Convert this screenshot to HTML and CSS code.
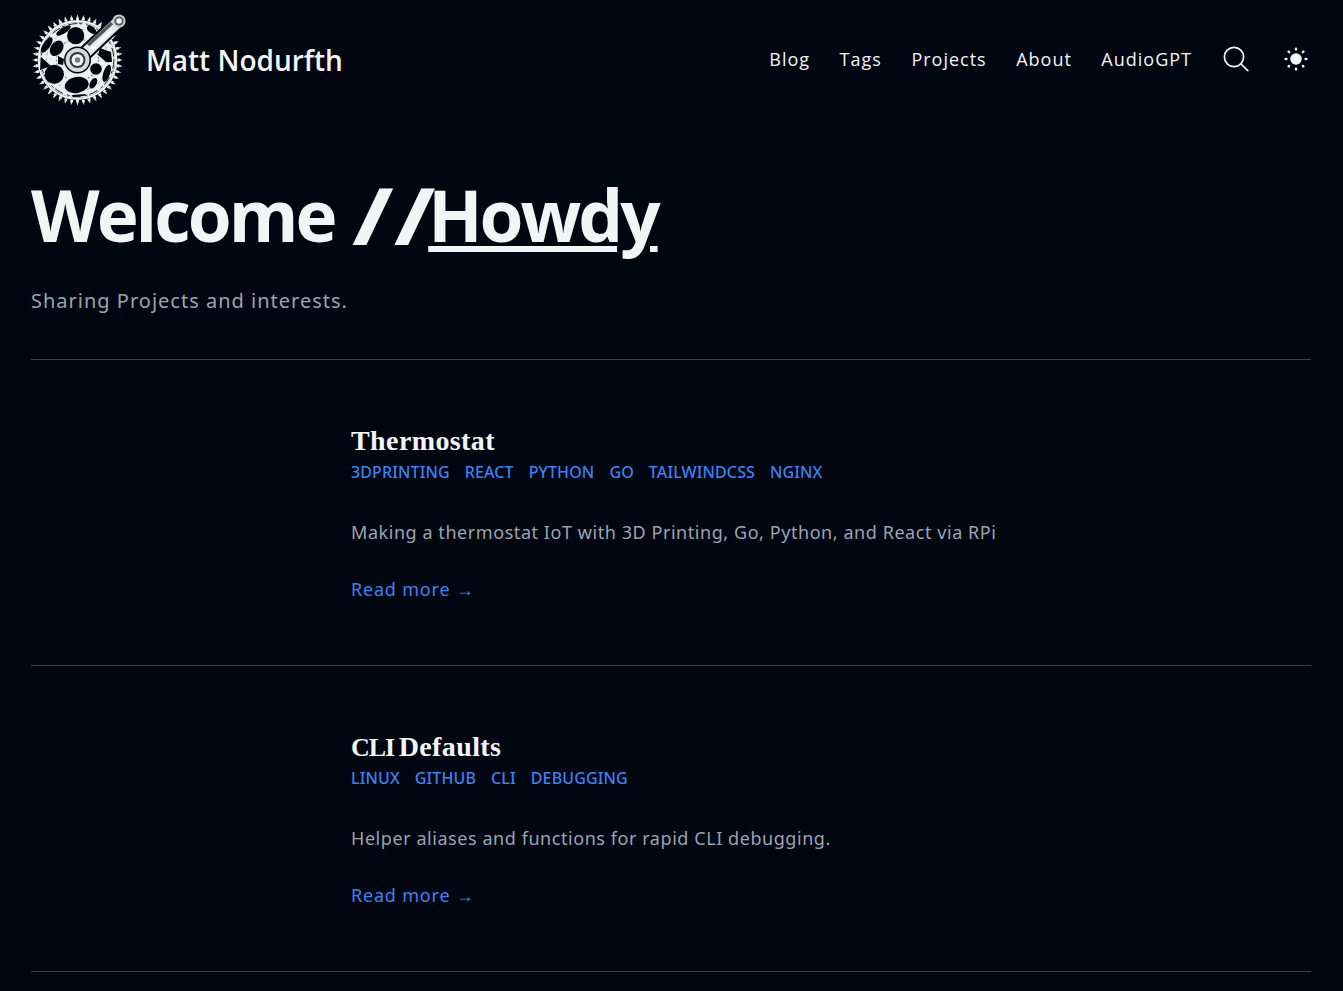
FILE: index.html
```html
<!DOCTYPE html>
<html lang="en">
<head>
<meta charset="utf-8">
<title>Matt Nodurfth</title>
<link rel="stylesheet" href="styles.css">
</head>
<body>
<div class="page">
  <header class="site-header">
    <a class="brand" href="#">
      <svg class="logo" viewBox="0 0 96 96" aria-hidden="true">
        <g fill="none" stroke="#f4f5f7">
          <circle cx="45.5" cy="48" r="44.4" pathLength="44" stroke-width="1.2" stroke-dasharray="0.12 0.88" stroke-dashoffset="0.06"/>
          <circle cx="45.5" cy="48" r="43" pathLength="44" stroke-width="1.6" stroke-dasharray="0.26 0.74" stroke-dashoffset="0.13"/>
          <circle cx="45.5" cy="48" r="41.2" pathLength="44" stroke-width="2.4" stroke-dasharray="0.48 0.52" stroke-dashoffset="0.24"/>
          <circle cx="45.5" cy="48" r="38.8" stroke-width="2.2"/>
        </g>
        <circle cx="45.5" cy="48" r="37.8" fill="#eeeff1"/>
        <g fill="none" stroke="#01050f">
          <circle cx="45.5" cy="48" r="36.4" stroke-width="0.9" stroke-dasharray="9 2 3 4"/>
          <circle cx="45.5" cy="48" r="31" stroke-width="0.6" stroke="#777a80" stroke-dasharray="3 3"/>
          <circle cx="45.5" cy="48" r="21" stroke-width="1.2" stroke="#8d9096" stroke-dasharray="2 2"/>
        </g>
        <g fill="#01050f">
          <circle cx="43.7" cy="23.7" r="8.6"/>
          <ellipse cx="24.7" cy="36.3" rx="6" ry="8.4" transform="rotate(35 24.7 36.3)"/>
          <ellipse cx="31.5" cy="18.5" rx="3" ry="8.4" transform="rotate(58 31.5 18.5)"/>
          <ellipse cx="14.7" cy="33" rx="3.6" ry="9" transform="rotate(35 14.7 33)"/>
          <path d="M9 45l10 9-11 4z"/>
          <circle cx="22.3" cy="62.3" r="9.6"/>
          <ellipse cx="44.7" cy="73" rx="12" ry="8" transform="rotate(-10 44.7 73)"/>
          <circle cx="64" cy="57" r="5.8"/>
          <ellipse cx="74.7" cy="61.3" rx="3.4" ry="9" transform="rotate(18 74.7 61.3)"/>
          <ellipse cx="61.3" cy="71.3" rx="3.2" ry="5.8" transform="rotate(30 61.3 71.3)"/>
          <path d="M68 36l11 4 1 10-6 0-8-7z"/>
          <ellipse cx="59.7" cy="18" rx="5.6" ry="3" transform="rotate(35 59.7 18)"/>
          <path d="M40 83l14-1-2 2-11 1z"/>
          <path d="M26 44l6 3-1 6-5-1z"/>
        </g>
        <path d="M48 46L87 9" stroke="#01050f" stroke-width="15" stroke-linecap="round"/>
        <path d="M47 47L87 9" stroke="#e6e7ea" stroke-width="11" stroke-linecap="round"/>
        <path d="M56 33L80 11" stroke="#53565c" stroke-width="3.6"/>
        <path d="M60 37L80 18" stroke="#ffffff" stroke-width="3"/>
        <circle cx="87" cy="9" r="6.6" fill="#c9cacd"/>
        <circle cx="87" cy="9" r="4.6" fill="#55585e"/>
        <circle cx="87" cy="9" r="2.8" fill="#f4f5f7"/>
        <circle cx="45.5" cy="48" r="13.5" fill="#01050f"/>
        <circle cx="45.5" cy="48" r="12" fill="#d8d9dc"/>
        <circle cx="45.5" cy="48" r="8" fill="#33353b"/>
        <circle cx="45.5" cy="48" r="6" fill="#f4f5f7"/>
        <circle cx="45.5" cy="48" r="2.8" fill="#777a80"/>
      </svg>
      <span class="brand-name">Matt Nodurfth</span>
    </a>
    <nav class="nav">
      <a href="#">Blog</a>
      <a href="#">Tags</a>
      <a href="#">Projects</a>
      <a href="#">About</a>
      <a href="#">AudioGPT</a>
      <button class="icon-btn search" aria-label="Search">
        <svg viewBox="0 0 26 26" fill="none" stroke="#f1f3f5" stroke-width="1.7" stroke-linecap="round"><circle cx="11" cy="11" r="9.6"/><path d="M18 18l6.8 6.6"/></svg>
      </button>
      <button class="icon-btn theme" aria-label="Theme">
        <svg viewBox="0 0 24 24" fill="#f1f3f5" stroke="none"><circle cx="12" cy="12" r="5.8"/><g stroke="#f1f3f5" stroke-width="2.4" stroke-linecap="round"><path d="M12 1.6v.8M12 21.6v.8M1.6 12h.8M21.6 12h.8M4.6 4.6l.5.5M18.9 18.9l.5.5M4.6 19.4l.5-.5M18.9 5.1l.5-.5"/></g></svg>
      </button>
    </nav>
  </header>

  <section class="intro">
    <h1 class="hero"><span class="hero-word">Welcome</span> <span class="hero-slash">//</span><a href="#">Howdy</a></h1>
    <p class="lead">Sharing Projects and interests.</p>
  </section>

  <ul class="posts">
    <li class="post">
      <div class="post-body">
        <h2><a href="#">Thermostat</a></h2>
        <div class="tags"><a href="#">3DPRINTING</a><a href="#">REACT</a><a href="#">PYTHON</a><a href="#">GO</a><a href="#">TAILWINDCSS</a><a href="#">NGINX</a></div>
        <p class="summary">Making a thermostat IoT with 3D Printing, Go, Python, and React via RPi</p>
        <a class="more" href="#">Read more <span class="arrow">→</span></a>
      </div>
    </li>
    <li class="post">
      <div class="post-body">
        <h2><a href="#"><span class="caps">CLI</span> Defaults</a></h2>
        <div class="tags"><a href="#">LINUX</a><a href="#">GITHUB</a><a href="#">CLI</a><a href="#">DEBUGGING</a></div>
        <p class="summary">Helper aliases and functions for rapid CLI debugging.</p>
        <a class="more" href="#">Read more <span class="arrow">→</span></a>
      </div>
    </li>
  </ul>
</div>
</body>
</html>
```

FILE: styles.css
```css
* { box-sizing: border-box; }
html, body { margin: 0; padding: 0; }
body {
  background: #020610;
  color: #f3f4f6;
  font-family: "Noto Sans", "Liberation Sans", sans-serif;
  height: 991px;
  overflow: hidden;
}
a { color: inherit; text-decoration: none; }
.page { padding: 0 32px 0 31px; }
.site-header {
  display: flex;
  align-items: center;
  justify-content: space-between;
  height: 120px;
}
.brand { display: flex; align-items: center; gap: 18px; }
.logo { width: 96px; height: 96px; display: block; margin-left: 1px; }
.brand-name {
  font-family: "Open Sans", sans-serif;
  font-size: 28px;
  font-weight: 600;
  color: #f3f4f6;
}
.nav {
  display: flex;
  align-items: center;
  gap: 29.5px;
  margin-bottom: 2px;
  font-size: 18px;
  font-family: "Open Sans", sans-serif;
  font-weight: 500;
}
.nav a { letter-spacing: 1px; }
.icon-btn { background: none; border: 0; padding: 0; display: block; }
.icon-btn svg { display: block; }
.search { margin-left: 1px; }
.search svg { width: 26px; height: 26px; }
.theme { margin-left: 6px; margin-right: 3px; }
.theme svg { width: 24px; height: 24px; }
.intro { height: 240px; padding-top: 57px; border-bottom: 1px solid #374151; }
.hero {
  margin: 0;
  font-family: "Open Sans", sans-serif;
  font-size: 71px;
  line-height: 76px;
  font-weight: 700;
  letter-spacing: -1.3px;
  color: #f3f4f6;
  white-space: nowrap;
}
.hero-word { letter-spacing: -3px; }
.hero-slash {
  display: inline-block;
  letter-spacing: 0;
  margin-right: 18px;
  transform: scale(1.42, 1.12);
  transform-origin: left center;
}
.hero a { letter-spacing: -3px; text-decoration: underline; text-decoration-thickness: 6px; text-underline-offset: 4px; }
.lead { margin: 34px 0 0; font-size: 20px; line-height: 28px; letter-spacing: 1px; color: #9ca3af; }
.posts { list-style: none; margin: 0; padding: 0; }
.post { height: 306px; border-bottom: 1px solid #374151; padding: 62px 0 0 320px; }
.post h2 { margin: 0; font-family: "Liberation Serif", serif; font-size: 28px; line-height: 38px; font-weight: 700; letter-spacing: 0.4px; word-spacing: -3px; color: #f3f4f6; }
.caps { font-size: 26px; line-height: 1; letter-spacing: -1px; }
.tags { display: flex; gap: 15px; font-size: 16px; line-height: 24px; font-weight: 500; letter-spacing: 0.12px; color: #3b82f6; }
.summary { margin: 34px 0 0; font-size: 18px; line-height: 28px; letter-spacing: 0.56px; color: #9ca3af; }
.more { display: block; margin-top: 29px; font-size: 18px; line-height: 28px; letter-spacing: 0.8px; color: #3b82f6; }
.arrow { font-family: "Liberation Sans", sans-serif; font-size: 18px; letter-spacing: 0; }
```
